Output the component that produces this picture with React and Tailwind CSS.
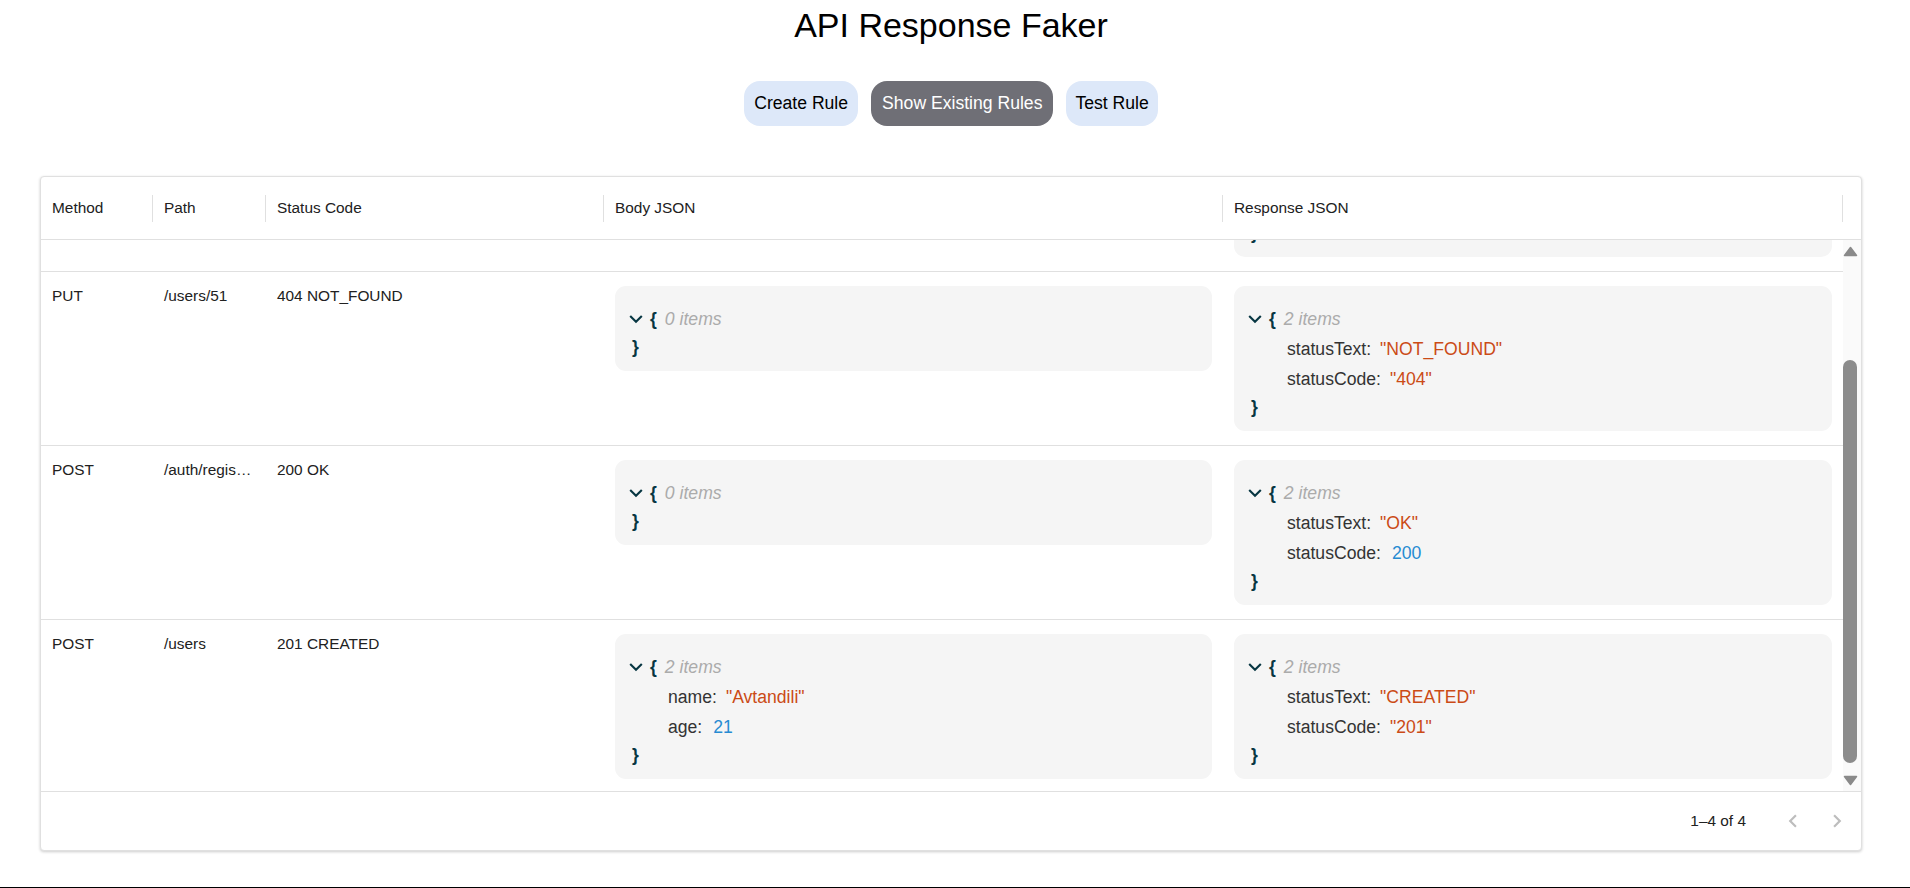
import React, { useLayoutEffect, useRef } from "react";

const rules = [
  {
    method: "GET",
    path: "/users",
    status: "200 OK",
    body: {},
    response: { statusText: "OK", statusCode: "200" },
  },
  {
    method: "PUT",
    path: "/users/51",
    status: "404 NOT_FOUND",
    body: {},
    response: { statusText: "NOT_FOUND", statusCode: "404" },
  },
  {
    method: "POST",
    path: "/auth/register",
    status: "200 OK",
    body: {},
    response: { statusText: "OK", statusCode: 200 },
  },
  {
    method: "POST",
    path: "/users",
    status: "201 CREATED",
    body: { name: "Avtandili", age: 21 },
    response: { statusText: "CREATED", statusCode: "201" },
  },
];

const columns = [
  { label: "Method", width: "w-[112px]" },
  { label: "Path", width: "w-[113px]" },
  { label: "Status Code", width: "w-[338px]" },
  { label: "Body JSON", width: "w-[619px]" },
  { label: "Response JSON", width: "w-[620px]" },
];

function Chevron() {
  return (
    <svg width="14" height="10" viewBox="0 0 14 10" className="shrink-0">
      <path d="M1.2 2 L7 7.8 L12.8 2" fill="none" stroke="#073642" strokeWidth="2.1" />
    </svg>
  );
}

function JsonBox({ data }) {
  const entries = Object.entries(data);
  return (
    <div className="rounded-[11px] bg-[#f5f5f5] pt-[18px] pb-[11px] px-[14px] text-[17.6px]">
      <div className="flex items-center h-[30px]">
        <Chevron />
        <span className="ml-[7px] font-bold text-[#073642]">{"{"}</span>
        <span className="ml-[8px] italic text-[#ababab]">{entries.length} items</span>
      </div>
      {entries.map(([key, value]) => (
        <div key={key} className="flex items-center h-[30px] pl-[39px]">
          <span className="text-[#333333]">{key}:</span>
          {typeof value === "number" ? (
            <span className="ml-[11px] text-[#268bd2]">{value}</span>
          ) : (
            <span className="ml-[9px] text-[#cb4b16]">"{value}"</span>
          )}
        </div>
      ))}
      <div className="flex items-center h-[26px] pl-[3px] font-bold text-[#073642]">{"}"}</div>
    </div>
  );
}

function Triangle({ down }) {
  return (
    <svg width="15" height="11" viewBox="0 0 15 11">
      <path
        d={down ? "M1.5 1.5 L13.5 1.5 L7.5 9.5 Z" : "M7.5 1.5 L13.5 9.5 L1.5 9.5 Z"}
        fill="#8a8a8a"
        stroke="#8a8a8a"
        strokeWidth="1.5"
        strokeLinejoin="round"
      />
    </svg>
  );
}

export default function App() {
  const bodyRef = useRef(null);

  useLayoutEffect(() => {
    if (bodyRef.current) bodyRef.current.scrollTop = bodyRef.current.scrollHeight;
  }, []);

  return (
    <div className="h-[888px] bg-white border-b border-black font-['Liberation_Sans',Arial,sans-serif] text-[#212121] overflow-hidden">
      <div className="pl-[40px] pr-[48px]">
        <h1 className="mt-[5px] text-center text-[34px] leading-[40px] font-normal text-black">
          API Response Faker
        </h1>

        {/* Tabs */}
        <div className="mt-[36px] flex justify-center gap-[13px] text-[17.6px]">
          <button className="h-[45px] px-[10px] rounded-[16px] bg-[#dde8f9] text-black">Create Rule</button>
          <button className="h-[45px] px-[11px] rounded-[16px] bg-[#6f6f76] text-white">Show Existing Rules</button>
          <button className="h-[45px] px-[9px] rounded-[16px] bg-[#dde8f9] text-black">Test Rule</button>
        </div>

        {/* Grid */}
        <div className="mt-[50px] border border-[#e0e0e0] rounded-[4px] shadow-[0_1px_3px_rgba(0,0,0,0.2)] bg-white text-[15.4px]">
          <div className="flex h-[63px] border-b border-[#e0e0e0]">
            {columns.map((col) => (
              <div key={col.label} className={`${col.width} flex items-center justify-between`}>
                <span className="px-[11px]">{col.label}</span>
                <span className="h-[27px] w-px bg-[#e0e0e0]" />
              </div>
            ))}
          </div>

          <div className="flex">
            <div ref={bodyRef} className="w-[1802px] h-[551px] overflow-hidden">
              {rules.map((rule, i) => (
                <div
                  key={i}
                  className={`flex ${i < rules.length - 1 ? "border-b border-[#e0e0e0] pb-[14px]" : "pb-[12px]"}`}
                >
                  <div className="w-[112px] px-[11px] pt-[13px] leading-[22px]">{rule.method}</div>
                  <div className="w-[113px] pl-[11px] pr-[14px] pt-[13px] leading-[22px] truncate">{rule.path}</div>
                  <div className="w-[338px] px-[11px] pt-[13px] leading-[22px]">{rule.status}</div>
                  <div className="w-[619px] px-[11px] pt-[14px]">
                    <JsonBox data={rule.body} />
                  </div>
                  <div className="w-[620px] px-[11px] pt-[14px]">
                    <JsonBox data={rule.response} />
                  </div>
                </div>
              ))}
            </div>

            {/* scrollbar */}
            <div className="w-[18px] h-[551px] bg-[#fafafa] flex flex-col">
              <div className="h-[22px] flex items-center">
                <Triangle />
              </div>
              <div className="flex-1 flex flex-col justify-end pb-[7px]">
                <div className="w-[14px] h-[403px] rounded-full bg-[#8c8c8c]" />
              </div>
              <div className="h-[21px] flex items-center">
                <Triangle down />
              </div>
            </div>
          </div>

          <div className="h-[59px] border-t border-[#e0e0e0] flex items-center justify-end pr-[2px]">
            <span className="mr-[25px]">1–4 of 4</span>
            <button className="w-[44px] h-[44px] flex items-center justify-center text-[#bdbdbd]">
              <svg width="26" height="26" viewBox="0 0 24 24" fill="currentColor">
                <path d="M15.41 16.59 10.83 12l4.58-4.59L14 6l-6 6 6 6 1.41-1.41z" />
              </svg>
            </button>
            <button className="w-[44px] h-[44px] flex items-center justify-center text-[#bdbdbd]">
              <svg width="26" height="26" viewBox="0 0 24 24" fill="currentColor">
                <path d="M8.59 16.59 13.17 12 8.59 7.41 10 6l6 6-6 6-1.41-1.41z" />
              </svg>
            </button>
          </div>
        </div>
      </div>
    </div>
  );
}
